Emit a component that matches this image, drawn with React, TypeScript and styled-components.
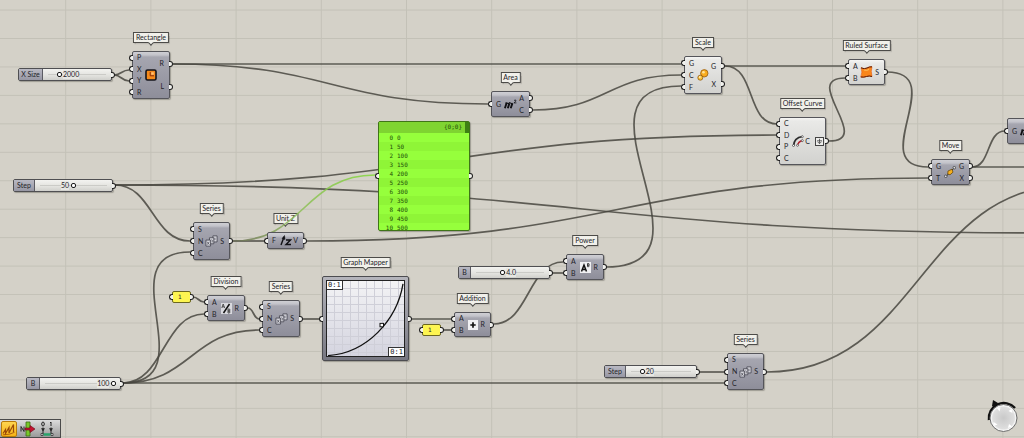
import React from 'react';
import styled, { createGlobalStyle, css } from 'styled-components';

const GlobalStyle = createGlobalStyle`
  *, *::before, *::after { box-sizing: border-box; }
  body {
    margin: 0;
    background: #d4d1c8;
    font-family: Lato, "Liberation Sans", sans-serif;
    font-size: 7px;
    line-height: 9px;
    color: #232328;
  }
`;

const Canvas = styled.main`
  position: relative;
  width: 100%;
  min-height: 100vh;
  overflow: hidden;
`;

const Backdrop = styled.svg`
  position: absolute;
  inset: 0;
  width: 100%;
  height: 100%;
`;

const Wires = styled.svg`
  position: absolute;
  inset: 0;
  width: 100%;
  height: 100%;
  z-index: 1;
  fill: none;
  stroke: #48463f;
  stroke-width: 1.7;
  stroke-opacity: 0.85;
`;

/* ---------- nodes ---------- */

const Placed = styled.section<{ $x: number; $y: number }>`
  position: absolute;
  left: ${p => p.$x}px;
  top: ${p => p.$y}px;
`;

const Tag = styled.h2`
  position: absolute;
  z-index: 0;
  left: 50%;
  bottom: calc(100% + 8px);
  transform: translateX(-50%);
  margin: 0;
  padding: 0 2px;
  border: 1px solid #4c4b48;
  background: #f1f0ea;
  font-size: 7px;
  font-weight: 400;
  line-height: 9px;
  white-space: nowrap;
  box-shadow: 1px 1px 1px rgba(60, 58, 50, 0.25);
  &::after {
    content: "";
    position: absolute;
    left: 50%;
    bottom: -3px;
    width: 4px;
    height: 4px;
    margin-left: -2px;
    transform: rotate(45deg);
    border: solid #4c4b48;
    border-width: 0 1px 1px 0;
    background: #f1f0ea;
  }
`;

const leftNub = css`
  &::before {
    content: "";
    position: absolute;
    left: -4px;
    top: 50%;
    width: 4px;
    height: 6px;
    margin-top: -3px;
    border: 1px solid #1d1d1d;
    border-right: 0;
    border-radius: 4px 0 0 4px;
    background: #f2f2ee;
  }
`;

const rightNub = css`
  &::after {
    content: "";
    position: absolute;
    right: -4px;
    top: 50%;
    width: 4px;
    height: 6px;
    margin-top: -3px;
    border: 1px solid #1d1d1d;
    border-left: 0;
    border-radius: 0 4px 4px 0;
    background: #f2f2ee;
  }
`;

const Body = styled.div<{ $w: number; $h: number; $light?: boolean }>`
  position: relative;
  z-index: 2;
  display: flex;
  width: ${p => p.$w}px;
  height: ${p => p.$h}px;
  border: 1px solid #55555a;
  border-radius: 2px;
  background: ${p =>
    p.$light
      ? 'linear-gradient(#f6f6f4 0, #e9e9e7 3px, #d2d2cf 100%)'
      : 'linear-gradient(#cfcfd4 0, #c3c3ca 3px, #a6a6b0 5px, #8e8e9a 100%)'};
  box-shadow: 1px 1px 1px rgba(60, 58, 50, 0.35);
`;

const Ports = styled.ul`
  display: flex;
  flex: none;
  flex-direction: column;
  min-width: 10px;
  margin: 0;
  padding: 0;
  list-style: none;
`;

const Port = styled.li<{ $out?: boolean; $tight?: boolean }>`
  position: relative;
  display: flex;
  flex: 1;
  align-items: center;
  justify-content: ${p => (p.$out ? 'flex-end' : 'flex-start')};
  gap: 5px;
  padding: ${p => (p.$out ? (p.$tight ? '0 1px 0 0' : '0 5px 0 0') : '0 0 0 4px')};
  ${p => (p.$out ? rightNub : leftNub)}
`;

const Glyph = styled.div`
  display: flex;
  flex: 1;
  min-width: 0;
  align-items: center;
  justify-content: center;
  svg { flex: none; }
`;

const GraftIcon = () => (
  <svg width="9" height="9" viewBox="0 0 9 9">
    <rect x=".5" y=".5" width="8" height="8" fill="#eeeeec" stroke="#444" />
    <path d="M4.500 1.800v4.700M2.500 4.700l2 2 2-2M2 3.800h5" stroke="#444" fill="none" strokeWidth=".8" />
  </svg>
);

interface NodeProps {
  x: number;
  y: number;
  w: number;
  h: number;
  name?: string;
  ins: string[];
  outs: string[];
  light?: boolean;
  graft?: boolean;
  icon: React.ReactNode;
}

function Node({ x, y, w, h, name, ins, outs, light, graft, icon }: NodeProps) {
  return (
    <Placed $x={x} $y={y}>
      {name && <Tag>{name}</Tag>}
      <Body $w={w} $h={h} $light={light}>
        <Ports>{ins.map((p, i) => <Port key={i}>{p}</Port>)}</Ports>
        <Glyph>{icon}</Glyph>
        <Ports>
          {outs.map((p, i) => (
            <Port key={i} $out $tight={graft}>
              {p}
              {graft && <GraftIcon />}
            </Port>
          ))}
        </Ports>
      </Body>
    </Placed>
  );
}

/* ---------- sliders ---------- */

const SliderBody = styled.div<{ $w: number }>`
  position: relative;
  z-index: 2;
  display: flex;
  width: ${p => p.$w}px;
  height: 13px;
  border: 1px solid #4f4f52;
  border-radius: 2px;
  background: linear-gradient(#f3f3f0, #e2e2de 60%, #cfcfcb);
  box-shadow: 1px 1px 1px rgba(60, 58, 50, 0.35);
  ${rightNub}
`;

const SliderName = styled.label<{ $w: number }>`
  display: flex;
  align-items: center;
  justify-content: center;
  flex: none;
  width: ${p => p.$w}px;
  border-right: 1px solid #5c5c63;
  background: linear-gradient(#b9b9c3, #9797a4);
`;

const Track = styled.div`
  position: relative;
  flex: 1;
  display: flex;
  align-items: center;
  background: linear-gradient(#cbcbc7, #cbcbc7) center / calc(100% - 10px) 1px no-repeat;
`;

const thumb = css`
  width: 5px;
  height: 5px;
  border: 1px solid #1b1b1b;
  border-radius: 2px;
  background: #fff;
`;

const Range = styled.input`
  appearance: none;
  width: 100%;
  height: 11px;
  margin: 0;
  background: none;
  &::-webkit-slider-thumb { appearance: none; ${thumb} }
  &::-moz-range-thumb { ${thumb} }
`;

const Value = styled.output`
  position: absolute;
  top: 1px;
  background: #e7e7e3;
  font-size: 7px;
  pointer-events: none;
`;

interface SliderProps {
  x: number;
  y: number;
  w: number;
  nameW: number;
  name: string;
  value: number;
  max: number;
  digits?: number;
  before?: boolean;
}

function Slider({ x, y, w, nameW, name, value, max, digits = 0, before }: SliderProps) {
  const [v, setV] = React.useState(value);
  const id = React.useId();
  const f = v / max;
  const place = before
    ? { right: `calc((100% - 5px) * ${1 - f} + 7px)` }
    : { left: `calc((100% - 5px) * ${f} + 6px)` };
  return (
    <Placed $x={x} $y={y}>
      <SliderBody $w={w}>
        <SliderName htmlFor={id} $w={nameW}>{name}</SliderName>
        <Track>
          <Range
            id={id}
            type="range"
            min={0}
            max={max}
            step={digits ? 0.1 : 1}
            value={v}
            onChange={e => setV(Number(e.target.value))}
          />
          <Value htmlFor={id} style={place}>{v.toFixed(digits)}</Value>
        </Track>
      </SliderBody>
    </Placed>
  );
}

/* ---------- panels ---------- */

const Note = styled.div`
  position: relative;
  z-index: 2;
  width: 19px;
  height: 12px;
  padding: 0 5px;
  border: 1px solid #6b6720;
  border-radius: 2px;
  background: #fdf551;
  font: 6px/10px "DejaVu Sans Mono", monospace;
  ${leftNub}
  ${rightNub}
`;

const PanelBody = styled.div`
  position: relative;
  z-index: 2;
  width: 92px;
  height: 110px;
  border: 1px solid #3f7418;
  border-radius: 2px;
  font: 6px/9px "DejaVu Sans Mono", monospace;
  color: #245008;
  background: #96ff3c;
  box-shadow: 1px 1px 1px rgba(60, 58, 50, 0.35);
  ${leftNub}
  ${rightNub}
`;

const PanelClip = styled.div`
  height: 100%;
  overflow: hidden;
`;

const PanelHead = styled.header`
  display: flex;
  justify-content: flex-end;
  height: 11px;
  gap: 3px;
  background: #7fd431;
`;

const Scroll = styled.span`
  width: 4px;
  height: 11px;
  background: #3d8013;
`;

const Data = styled.table`
  width: 100%;
  border-collapse: collapse;
  td, th { padding: 0; font-weight: 400; }
  th { width: 14px; text-align: right; }
  td { padding-left: 4px; }
  tr:nth-child(even) { background: #8ff537; }
`;

const GraphBody = styled.div`
  position: relative;
  z-index: 2;
  width: 87px;
  height: 85px;
  padding: 3px;
  border: 1px solid #4c4c50;
  border-radius: 2px;
  background: linear-gradient(#b5b5bc, #777781);
  box-shadow: 1px 1px 1px rgba(60, 58, 50, 0.35);
  ${leftNub}
  ${rightNub}
`;

const Plot = styled.div`
  position: relative;
  display: flex;
  flex-direction: column;
  justify-content: space-between;
  height: 100%;
  border: 1px solid #222;
  background:
    repeating-linear-gradient(90deg, transparent 0 7px, #cfcfd8 7px 8px),
    repeating-linear-gradient(transparent 0 7px, #cfcfd8 7px 8px),
    linear-gradient(#f3f3f5, #d4d4df);
`;

const Curve = styled.svg`
  position: absolute;
  inset: 0;
  width: 100%;
  height: 100%;
`;

const Domain = styled.span<{ $end?: boolean }>`
  position: relative;
  align-self: ${p => (p.$end ? 'flex-end' : 'flex-start')};
  padding: 0 1px;
  border: solid #333;
  border-width: ${p => (p.$end ? '1px 0 0 1px' : '0 1px 1px 0')};
  background: #fff;
  font: 7px/8px "DejaVu Sans Mono", monospace;
`;

/* ---------- overlays ---------- */

const Toolbar = styled.nav`
  position: absolute;
  z-index: 3;
  left: 0;
  bottom: 0;
  display: flex;
  align-items: center;
  width: 61px;
  height: 19px;
  gap: 3px;
  padding: 1px;
  border: 1px solid #4a4a4a;
  border-left: 0;
  background: linear-gradient(#dcdcdc, #9a9a9a);
`;

const Tool = styled.button<{ $on?: boolean }>`
  width: 16px;
  height: 16px;
  padding: 0;
  border: ${p => (p.$on ? '1px solid #b97c0a' : '0')};
  border-radius: 2px;
  background: ${p => (p.$on ? 'linear-gradient(#ffd550, #f7b416)' : 'none')};
  svg { display: block; }
`;

const Compass = styled.svg`
  position: absolute;
  z-index: 3;
  right: 4px;
  bottom: 4px;
`;

/* ---------- icons ---------- */

const RectangleIcon = () => (
  <svg width="12" height="12" viewBox="0 0 12 12">
    <rect x="1" y="1" width="10" height="10" rx="1.500" fill="#f58a1c" stroke="#14141c" strokeWidth="1.600" />
    <path d="M5.200 3v3.800H9" fill="none" stroke="#8a2c08" />
    <path d="M6.300 3.300h2.400v2.400H6.300z" fill="#ffc27a" />
  </svg>
);

const SeriesIcon = () => (
  <svg width="13" height="12" viewBox="0 0 14 12" fill="#d5d5dc" stroke="#3c3c46" strokeWidth=".8">
    <path d="M8.500.5h4.500v6.500H8.500z" />
    <path d="M4.800 2.500h4.700V9H4.800z" />
    <path d="M1 5h5v6.500H1z" />
    <path d="M2.300 6.800l2.400 3.200M4.700 6.800l-2.400 3.200M7 4.500l.8.5v2.500M10.700 2.500v2.500" strokeWidth=".7" />
  </svg>
);

const UnitZIcon = () => (
  <svg width="12" height="11" viewBox="0 0 12 11" fill="none" stroke="#101014">
    <path d="M1 10L4 2" strokeWidth="1.400" />
    <path d="M2 3.500L4.500.5l.5 4z" fill="#101014" strokeWidth=".5" />
    <path d="M6 5h4.500L6 9.500h5" strokeWidth="1.400" />
  </svg>
);

const DivisionIcon = () => (
  <svg width="11" height="11" viewBox="0 0 11 11">
    <rect width="11" height="11" fill="#d9d9de" />
    <path d="M.8 5l1.400-4 1.400 4M1.300 3.800h2M7 6v4h1.500q1-1 0-2H7h1.500q1-1 0-2H7" fill="none" stroke="#333" strokeWidth=".8" />
    <path d="M2.500 10L8.500 1" stroke="#111" strokeWidth="1.500" />
  </svg>
);

const AdditionIcon = () => (
  <svg width="10" height="10" viewBox="0 0 10 10">
    <rect width="10" height="10" fill="#f0f0f3" />
    <path d="M5 2.300v5.400M2.300 5h5.400" stroke="#111" strokeWidth="1.700" />
  </svg>
);

const PowerIcon = () => (
  <svg width="11" height="11" viewBox="0 0 11 11">
    <rect width="11" height="11" fill="#f0f0f3" />
    <path d="M1.500 9.500L4 3l2.500 6.500M2.500 7.500h3" fill="none" stroke="#111" strokeWidth="1.500" />
    <path d="M7.500 1.500v3.200h1.300q1.200-.8 0-1.600H7.500h1.300q1-.8 0-1.600z" fill="none" stroke="#111" strokeWidth=".7" />
  </svg>
);

const AreaIcon = () => (
  <svg width="13" height="10" viewBox="0 0 13 10" fill="none" stroke="#101014">
    <path d="M.9 9.200L2.600 4M3.800 9.200L5.400 4.400M6.700 9.200l1.700-4.800" strokeWidth="1.900" />
    <path d="M1.500 4.200q1-.8 2 0t1.600-.1 1.700.1 1.700-.1" strokeWidth="1.100" />
    <path d="M10 1.800q.8-1.300 1.900-.6.600 1-2 2.700h2.500" strokeWidth=".8" />
  </svg>
);

const ScaleIcon = () => (
  <svg width="12" height="12" viewBox="0 0 12 12" stroke="#8a4d06" strokeWidth=".7">
    <circle cx="7.300" cy="4.300" r="3.700" fill="#f9ac1d" />
    <circle cx="6.500" cy="3.300" r="1.300" fill="#ffe39a" stroke="none" />
    <circle cx="3.300" cy="8.700" r="2.500" fill="#fbc43a" />
    <circle cx="2.800" cy="8" r=".9" fill="#fff0c0" stroke="none" />
  </svg>
);

const OffsetIcon = () => (
  <svg width="12" height="12" viewBox="0 0 12 12" fill="none">
    <path d="M1.500 11Q2 2.500 10.500 1.500" stroke="#2c2c2c" strokeWidth="1.700" />
    <path d="M5.500 11Q6 6.500 10.500 5.500" stroke="#b3202c" strokeWidth="1.300" />
    <g fill="#fff" stroke="#444" strokeWidth=".7">
      <circle cx="1.500" cy="10.500" r="1" />
      <circle cx="10.300" cy="1.700" r="1" />
      <circle cx="5.500" cy="10.300" r="1" />
      <circle cx="10.300" cy="5.600" r="1" />
    </g>
  </svg>
);

const RuledIcon = () => (
  <svg width="13" height="12" viewBox="0 0 13 12">
    <path d="M1 1.800Q4.500 3.500 7 2T12 .8Q10.500 5 12 10.500 9 9.500 6.500 10.500T.8 11Q2.800 6 1 1.800z" fill="#f9861b" stroke="#e9590c" strokeWidth=".6" />
    <path d="M1 1.800Q4.500 3.500 7 2T12 .8M.8 11q3 .5 5.700-.5t5.500 0" fill="none" stroke="#5b1c04" strokeWidth="1" />
    <path d="M4 4q3 1 5-.5" stroke="#ffc15c" fill="none" />
  </svg>
);

const MoveIcon = () => (
  <svg width="12" height="12" viewBox="0 0 12 12">
    <path d="M2 10.500L10.500 1.500" stroke="#222" strokeWidth=".9" />
    <path d="M4 5l4-1.800 1 3-3 2.600-2.300-.8z" fill="#f6b01e" stroke="#5b3d04" strokeWidth=".7" />
    <circle cx="1.700" cy="10.300" r="1.300" fill="#ddd" stroke="#333" strokeWidth=".7" />
    <circle cx="10.300" cy="1.700" r="1.300" fill="#ddd" stroke="#333" strokeWidth=".7" />
  </svg>
);

/* ---------- wires ---------- */

type Wire = [number, number, number, number];

const path = ([x1, y1, x2, y2]: Wire) => {
  const dx = x2 - x1;
  const d = dx / 2 + Math.max(0, Math.abs(y2 - y1) - dx) * 0.8;
  return `M${x1} ${y1}C${x1 + d} ${y1} ${x2 - d} ${y2} ${x2} ${y2}`;
};

const wires: Wire[] = [
  [114, 75, 129, 70], [114, 75, 129, 81],
  [173, 64, 681, 64], [173, 64, 488, 104],
  [533, 110, 681, 75], [115, 185, 777, 135],
  [115, 185, 190, 241], [115, 185, 1050, 233],
  [233, 241, 265, 241], [307, 241, 928, 178],
  [193, 297, 204, 302], [248, 308, 259, 319],
  [303, 319, 319, 319], [411, 319, 451, 319],
  [443, 330, 451, 330], [494, 324, 563, 262],
  [552, 273, 563, 273], [606, 267, 681, 86],
  [725, 66, 845, 66], [725, 66, 777, 124],
  [829, 141, 845, 78], [887, 72, 928, 167],
  [972, 167, 1005, 131], [972, 167, 1100, 167],
  [123, 383, 724, 383], [123, 383, 190, 252],
  [123, 383, 204, 314], [123, 383, 259, 330],
  [699, 372, 724, 372], [767, 372, 1072, 185],
];

const rows = Array.from({ length: 11 }, (_, i) => i * 50);

export default function App() {
  return (
    <>
      <GlobalStyle />
      <Canvas>
        <Backdrop aria-hidden="true">
          <defs>
            <pattern id="grid" x="65.200" y="38" width="85.200" height="28.450" patternUnits="userSpaceOnUse">
              <path d="M.5 0v29M0 .5h86" stroke="#c3c1b7" fill="none" />
            </pattern>
          </defs>
          <rect width="100%" height="100%" fill="url(#grid)" />
        </Backdrop>

        <Wires aria-hidden="true">
          <defs>
            <linearGradient id="live" gradientUnits="userSpaceOnUse" x1="233" y1="241" x2="377" y2="175">
              <stop offset="0" stopColor="#6d7058" />
              <stop offset=".4" stopColor="#8fbb5c" />
              <stop offset="1" stopColor="#82d83a" />
            </linearGradient>
          </defs>
          {wires.map((w, i) => <path key={i} d={path(w)} />)}
          <path d={path([233, 241, 375, 175])} stroke="url(#live)" />
        </Wires>

        <Slider x={18} y={68} w={94} nameW={24} name="X Size" value={2000} max={9000} />
        <Slider x={13} y={179} w={100} nameW={21} name="Step" value={50} max={100} before />
        <Slider x={26} y={377} w={95} nameW={13} name="B" value={100} max={105} before />
        <Slider x={458} y={266} w={92} nameW={12} name="B" value={4} max={10} digits={1} />
        <Slider x={604} y={365} w={93} nameW={21} name="Step" value={20} max={95} />

        <Node x={132} y={51} w={38} h={48} name="Rectangle" ins={['P', 'X', 'Y', 'R']} outs={['R', 'L']} icon={<RectangleIcon />} />
        <Node x={193} y={222} w={37} h={38} name="Series" ins={['S', 'N', 'C']} outs={['S']} icon={<SeriesIcon />} />
        <Node x={267} y={232} w={37} h={17} name="Unit Z" ins={['F']} outs={['V']} icon={<UnitZIcon />} />
        <Node x={207} y={295} w={38} h={26} name="Division" ins={['A', 'B']} outs={['R']} icon={<DivisionIcon />} />
        <Node x={262} y={300} w={38} h={37} name="Series" ins={['S', 'N', 'C']} outs={['S']} icon={<SeriesIcon />} />
        <Node x={454} y={312} w={37} h={25} name="Addition" ins={['A', 'B']} outs={['R']} icon={<AdditionIcon />} />
        <Node x={566} y={254} w={38} h={26} name="Power" ins={['A', 'B']} outs={['R']} icon={<PowerIcon />} />
        <Node x={491} y={91} w={39} h={26} name="Area" ins={['G']} outs={['A', 'C']} icon={<AreaIcon />} />
        <Node x={684} y={56} w={38} h={38} name="Scale" light ins={['G', 'C', 'F']} outs={['G', 'X']} icon={<ScaleIcon />} />
        <Node x={779} y={117} w={47} h={48} name="Offset Curve" light graft ins={['C', 'D', 'P', 'C']} outs={['C']} icon={<OffsetIcon />} />
        <Node x={848} y={59} w={37} h={26} name="Ruled Surface" light ins={['A', 'B']} outs={['S']} icon={<RuledIcon />} />
        <Node x={931} y={159} w={39} h={26} name="Move" ins={['G', 'T']} outs={['G', 'X']} icon={<MoveIcon />} />
        <Node x={1007} y={118} w={39} h={26} ins={['G']} outs={['', '']} icon={<AreaIcon />} />
        <Node x={727} y={353} w={37} h={37} name="Series" ins={['S', 'N', 'C']} outs={['S']} icon={<SeriesIcon />} />

        <Placed $x={172} $y={291}><Note>1</Note></Placed>
        <Placed $x={422} $y={324}><Note>1</Note></Placed>

        <Placed $x={378} $y={121}>
          <PanelBody>
            <PanelClip>
              <PanelHead>{'{0;0}'}<Scroll /></PanelHead>
              <Data>
                <tbody>
                  {rows.map((v, i) => (
                    <tr key={i}><th scope="row">{i}</th><td>{v}</td></tr>
                  ))}
                </tbody>
              </Data>
            </PanelClip>
          </PanelBody>
        </Placed>

        <Placed $x={322} $y={276}>
          <Tag>Graph Mapper</Tag>
          <GraphBody>
            <Plot>
              <Curve viewBox="0 0 77 77" preserveAspectRatio="none">
                <path d="M1 76.500C40 74 70 40 76 3" fill="none" stroke="#111" strokeWidth="1.300" />
                <rect x="53" y="43.500" width="3.500" height="3.500" fill="#fff" stroke="#111" />
              </Curve>
              <Domain>0:1</Domain>
              <Domain $end>0:1</Domain>
            </Plot>
          </GraphBody>
        </Placed>

        <Toolbar aria-label="Canvas widgets">
          <Tool $on aria-label="Profiler">
            <svg width="14" height="14" viewBox="0 0 14 14" fill="none" stroke="#9a4a08" strokeWidth="1.200">
              <path d="M1 11.500L3.500 7.500v4L7 5.500v5.500L11.500 2.500v7.500" />
              <path d="M1 12.800q7 0 11.500-2.500" strokeWidth=".8" />
            </svg>
          </Tool>
          <Tool aria-label="Navigation">
            <svg width="16" height="16" viewBox="0 0 16 16">
              <path d="M6 1h4v14H6z" fill="#76c82a" stroke="#3e6b12" strokeWidth=".8" />
              <path d="M1 10.500v-5l3 5v-5" fill="none" stroke="#222" />
              <path d="M5 7h5V4.500L15 8l-5 3.500V9H5z" fill="#c3122f" stroke="#6c0617" strokeWidth=".6" />
            </svg>
          </Tool>
          <Tool aria-label="Ranges">
            <svg width="16" height="16" viewBox="0 0 16 16" fill="none" stroke="#222">
              <ellipse cx="4" cy="3" rx="1.300" ry="2" />
              <path d="M11 2l1-1v4M4 6.500V13M12 6.500V13" />
              <path d="M2.500 7.500h3L4 10zM10.500 7.500h3L12 10z" fill="#222" strokeWidth=".5" />
              <path d="M4.500 13.500h7" stroke="#2aa36b" strokeWidth="2.500" />
              <path d="M2 12.500h2v2H2zM12 12.500h2v2h-2z" fill="#eee" strokeWidth=".7" />
            </svg>
          </Tool>
        </Toolbar>

        <Compass width="34" height="36" viewBox="0 0 34 36" aria-hidden="true">
          <defs>
            <radialGradient id="ball" cx=".5" cy=".5" r=".5">
              <stop offset="0" stopColor="#c9c9c9" />
              <stop offset=".8" stopColor="#dedede" />
              <stop offset=".9" stopColor="#f6f6f6" />
            </radialGradient>
          </defs>
          <path d="M3 22A15 15 0 0 1 29 10" fill="none" stroke="#111" strokeWidth="2.500" />
          <path d="M7 2l5 3-3 4-3-1z" fill="#111" />
          <circle cx="17.500" cy="20" r="13.500" fill="url(#ball)" stroke="#6c6c6c" />
          <path d="M10.500 9.500l4 0-1 4zM25.500 11l1 4-4-2zM7.500 24l0 4 4-1.500zM22 30l1-4 3 2.500z" fill="#fff" />
        </Compass>
      </Canvas>
    </>
  );
}
